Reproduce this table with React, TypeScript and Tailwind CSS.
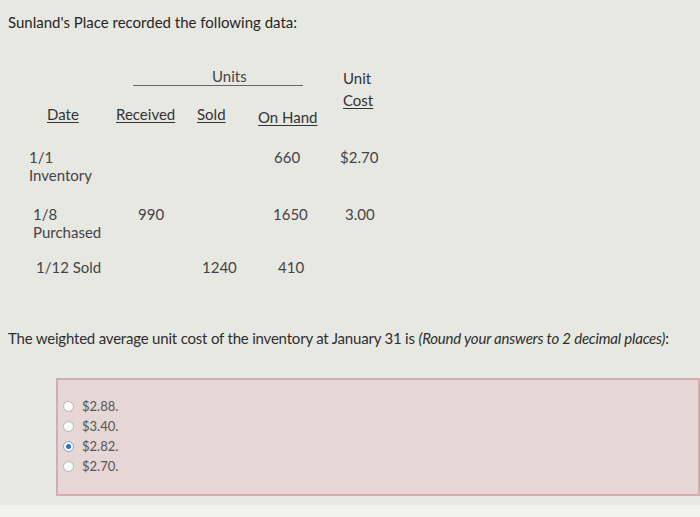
import React from "react";

const options = [
  { label: "$2.88.", checked: false },
  { label: "$3.40.", checked: false },
  { label: "$2.82.", checked: true },
  { label: "$2.70.", checked: false },
];

function Radio({ checked }: { checked: boolean }) {
  return (
    <span
      className={
        "flex h-[11px] w-[11px] shrink-0 items-center justify-center rounded-full border " +
        (checked ? "border-[#7aa5e6] bg-white" : "border-[#b9b4b4] bg-[#fafafa]")
      }
    >
      {checked ? <span className="h-[5px] w-[5px] rounded-full bg-[#2a6fdb]" /> : null}
    </span>
  );
}

export default function App() {
  return (
    <div className="w-[700px] h-[517px] overflow-hidden bg-[#e8e8e3] text-[#333] [font-family:Lato,'Noto_Sans',sans-serif]">
      <div className="h-[505px]">
        <h1 className="pl-[8px] pt-[12px] text-[15px] leading-[20px] text-[#262626]">
          Sunland's Place recorded the following data:
        </h1>

        {/* header block */}
        <div className="mt-[36px] flex">
          <div className="w-[330px]">
            <div className="ml-[133px] w-[170px] border-b border-[#666] pl-[79px] text-[15px] leading-[17px] text-[#444]">
              Units
            </div>
            <div className="mt-[19px] flex text-[15px] leading-[18px] text-[#333]">
              <span className="ml-[47px] w-[69px] underline underline-offset-2">Date</span>
              <span className="w-[81px] underline underline-offset-2">Received</span>
              <span className="w-[61px] underline underline-offset-2">Sold</span>
              <span className="mt-[3px] underline underline-offset-2">On Hand</span>
            </div>
          </div>
          <div className="ml-[13px] -mt-[1px] text-[15px] leading-[22px] text-[#333]">
            <div>Unit</div>
            <div className="underline underline-offset-2">Cost</div>
          </div>
        </div>

        {/* rows */}
        <div className="mt-[22px] flex text-[15px] leading-[18px] text-[#444]">
          <div className="w-[274px] pl-[29px]">
            1/1
            <br />
            Inventory
          </div>
          <div className="w-[66px]">660</div>
          <div>$2.70</div>
        </div>

        <div className="mt-[21px] flex text-[15px] leading-[18px] text-[#444]">
          <div className="w-[138px] pl-[33px]">
            1/8
            <br />
            Purchased
          </div>
          <div className="w-[135px]">990</div>
          <div className="w-[72px]">1650</div>
          <div>3.00</div>
        </div>

        <div className="mt-[17px] flex text-[15px] leading-[18px] text-[#444]">
          <div className="w-[202px] pl-[36px]">1/12 Sold</div>
          <div className="w-[76px]">1240</div>
          <div>410</div>
        </div>

        <p className="mt-[53px] pl-[8px] text-[15px] leading-[18px] tracking-[-0.2px] text-[#2e2e2e]">
          The weighted average unit cost of the inventory at January 31 is{" "}
          <em>(Round your answers to 2 decimal places)</em>:
        </p>

        <div className="ml-[56px] mt-[31px] h-[118px] border-2 border-[#d4adae] bg-[#e6d6d5] pl-[5px] pt-[19px]">
          <div className="flex flex-col gap-[6px]">
            {options.map((o) => (
              <label key={o.label} className="flex h-[14px] items-center gap-[8px] text-[13px] leading-[14px] text-[#555]">
                <Radio checked={o.checked} />
                <span>{o.label}</span>
              </label>
            ))}
          </div>
        </div>
      </div>
      <div className="h-[12px] bg-[#f2f2ee]" />
    </div>
  );
}
